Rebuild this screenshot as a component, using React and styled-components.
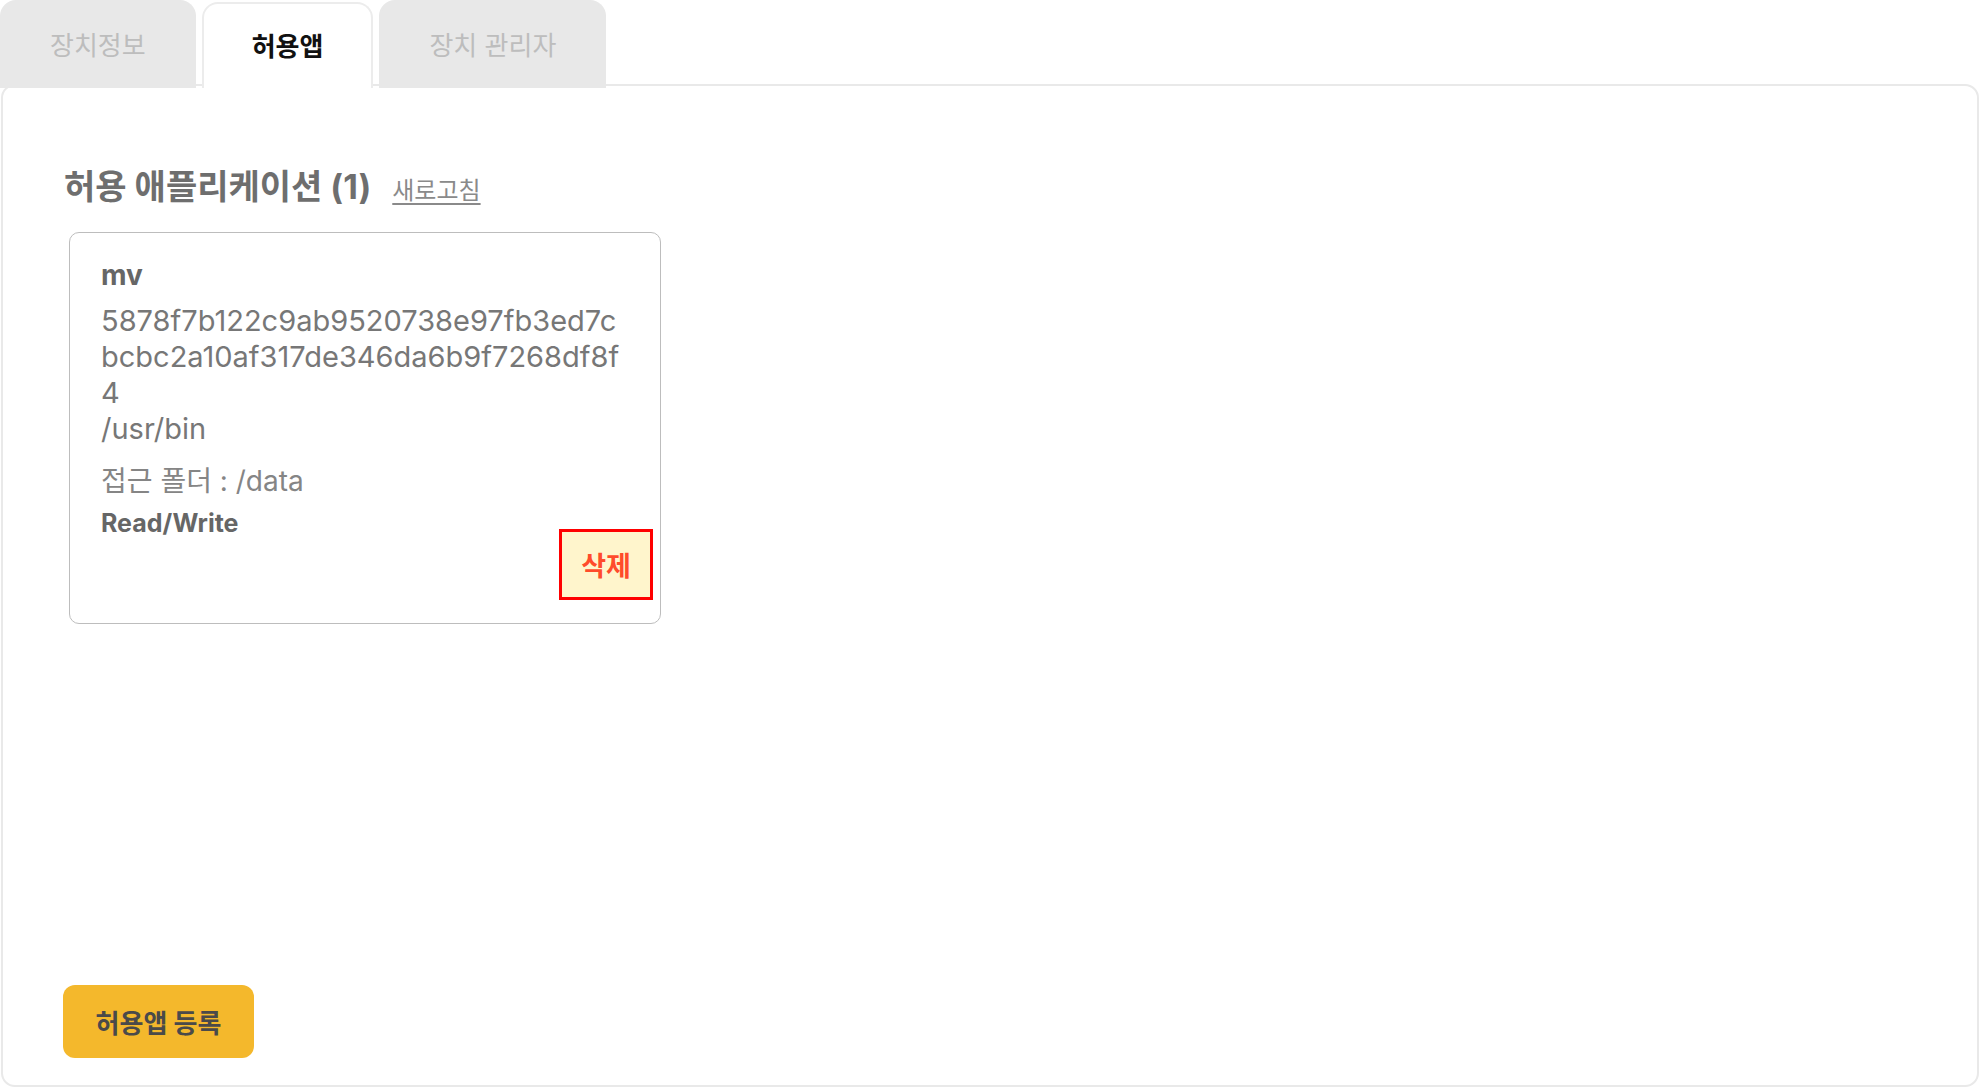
import React from "react";
import styled, { createGlobalStyle } from "styled-components";

const GlobalStyle = createGlobalStyle`
  html, body {
    margin: 0;
    padding: 0;
    background: #fff;
  }
  body {
    font-family: Inter, "Noto Sans CJK KR", sans-serif;
  }
  * {
    box-sizing: border-box;
  }
`;

const tabs = ["장치정보", "허용앱", "장치 관리자"];

const apps = [
  {
    name: "mv",
    hash: "5878f7b122c9ab9520738e97fb3ed7cbcbc2a10af317de346da6b9f7268df8f4",
    path: "/usr/bin",
    folder: "/data",
    mode: "Read/Write",
  },
];

const App = () => {
  return (
    <Page>
      <GlobalStyle />
      <TabBar>
        {tabs.map((t, idx) => (
          <Tab key={t} $active={idx === 1}>
            {t}
          </Tab>
        ))}
      </TabBar>
      <Panel>
        <TitleRow>
          <Title>허용 애플리케이션 ({apps.length})</Title>
          <Refresh>새로고침</Refresh>
        </TitleRow>
        {apps.map((app) => (
          <Card key={app.hash}>
            <Info>
              <AppName>{app.name}</AppName>
              <Hash>{app.hash}</Hash>
              <Path>{app.path}</Path>
              <Folder>접근 폴더 : {app.folder}</Folder>
              <Mode>{app.mode}</Mode>
            </Info>
            <DeleteButton>삭제</DeleteButton>
          </Card>
        ))}
        <AddButton>허용앱 등록</AddButton>
      </Panel>
    </Page>
  );
};

export default App;

const Page = styled.div`
  display: flex;
  flex-direction: column;
  height: 100vh;
`;

const TabBar = styled.div`
  display: flex;
  gap: 6px;
  height: 86px;
  margin-bottom: -2px;
  position: relative;
  z-index: 1;
`;

const Tab = styled.div`
  display: flex;
  align-items: center;
  justify-content: center;
  padding: 0 48px 4px;
  border-radius: 16px 16px 0 0;
  font-size: 26px;
  background: ${(p) => (p.$active ? "#fff" : "#e8e8e8")};
  color: ${(p) => (p.$active ? "#111" : "#bdbdbd")};
  font-weight: ${(p) => (p.$active ? 700 : 400)};
  border: 2px solid ${(p) => (p.$active ? "#ececec" : "#e8e8e8")};
  border-bottom: none;
  margin-top: ${(p) => (p.$active ? "2px" : "0")};
  height: ${(p) => (p.$active ? "86px" : "88px")};
`;

const Panel = styled.div`
  flex: 1;
  display: flex;
  flex-direction: column;
  align-items: flex-start;
  margin: 0 1px 1px 1px;
  border: 2px solid #e9e9e9;
  border-radius: 14px;
  padding: 81px 60px 27px 61px;
`;

const TitleRow = styled.div`
  display: flex;
  align-items: baseline;
  gap: 21px;
`;

const Title = styled.h2`
  margin: 0;
  font-size: 34px;
  line-height: 40px;
  font-weight: 700;
  color: #6e6e6e;
`;

const Refresh = styled.a`
  font-size: 24px;
  color: #8a8a8a;
  text-decoration: underline;
  text-underline-offset: 4px;
  cursor: pointer;
`;

const Card = styled.div`
  display: flex;
  flex-direction: column;
  width: 592px;
  height: 392px;
  margin: 25px 0 0 5px;
  padding: 26px 7px 22px 31px;
  border: 1.5px solid #bdbdbd;
  border-radius: 10px;
`;

const Info = styled.div`
  padding-right: 24px;
  color: #777;
`;

const AppName = styled.div`
  font-size: 28px;
  line-height: 32px;
  font-weight: 700;
  color: #666;
  margin-bottom: 12px;
`;

const Hash = styled.div`
  font-size: 29px;
  line-height: 36px;
  word-break: break-all;
`;

const Path = styled.div`
  font-size: 29px;
  line-height: 36px;
`;

const Folder = styled.div`
  margin-top: 16px;
  font-size: 28px;
  line-height: 36px;
  color: #858585;
`;

const Mode = styled.div`
  margin-top: 10px;
  font-size: 25px;
  line-height: 28px;
  font-weight: 700;
  color: #666;
`;

const DeleteButton = styled.button`
  align-self: flex-end;
  flex-shrink: 0;
  margin-top: -8px;
  width: 94px;
  height: 71px;
  border: 3px solid #ff0000;
  background: #fff5cc;
  color: #ff4b2b;
  font-family: inherit;
  font-size: 27px;
  font-weight: 600;
  cursor: pointer;
`;

const AddButton = styled.button`
  margin: auto 0 0 -1px;
  width: 191px;
  height: 73px;
  border: none;
  border-radius: 12px;
  background: #f4b82c;
  color: #4a4a4a;
  font-family: inherit;
  font-size: 26px;
  font-weight: 700;
  cursor: pointer;
`;
